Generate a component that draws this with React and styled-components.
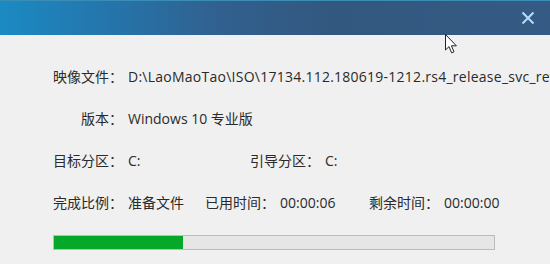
import React from 'react'
import styled, { createGlobalStyle } from 'styled-components'

const GlobalStyle = createGlobalStyle`
  html, body {
    margin: 0;
    padding: 0;
    background: #f0f0f0;
  }
  body {
    font-family: "Open Sans", "Noto Sans CJK SC", sans-serif;
  }
`

const rows = [
  [{ label: '映像文件：', value: 'D:\\LaoMaoTao\\ISO\\17134.112.180619-1212.rs4_release_svc_refresh_CLIENTCONSUMER_RET_x64FRE_zh-cn.iso', wide: true }],
  [{ label: '版本：', value: 'Windows 10 专业版' }],
  [
    { label: '目标分区：', value: 'C:', w: 122 },
    { label: '引导分区：', value: 'C:' }
  ],
  [
    { label: '完成比例：', value: '准备文件', w: 77 },
    { label: '已用时间：', value: '00:00:06', w: 89 },
    { label: '剩余时间：', value: '00:00:00' }
  ]
]

function App() {
  const percent = 130 / 442 * 100
  return (
    <Window>
      <GlobalStyle />
      <TitleBar>
        <Close>
          <svg width="14" height="14" viewBox="0 0 14 14">
            <path d="M1.5 1.5 L12.5 12.5 M12.5 1.5 L1.5 12.5" stroke="#b3ddf8" strokeWidth="2" fill="none" />
          </svg>
        </Close>
        <Cursor>
          <svg width="13" height="20" viewBox="0 0 13 20">
            <path d="M0.5 0.5 L0.5 16 L4 12.6 L6.6 18.8 L9 17.8 L6.4 11.8 L11.4 11.8 Z" fill="#fff" stroke="#222" strokeWidth="1" strokeLinejoin="round" />
          </svg>
        </Cursor>
      </TitleBar>
      <Body>
        {rows.map((row, i) => (
          <Row key={i}>
            {row.map((f, j) => (
              <React.Fragment key={j}>
                <Label first={j === 0}>{f.label}</Label>
                <Value wide={f.wide} style={f.w ? { width: f.w } : undefined}>{f.value}</Value>
              </React.Fragment>
            ))}
          </Row>
        ))}
        <Track>
          <Fill style={{ width: percent + '%' }} />
        </Track>
      </Body>
    </Window>
  )
}

export default App

const Window = styled.div`
  width: 550px;
  height: 264px;
  overflow: hidden;
  position: relative;
  background: #f0f0f0;
  color: #2a2a2a;
  font-size: 14px;
`

const TitleBar = styled.div`
  height: 35px;
  position: relative;
  display: flex;
  justify-content: flex-end;
  align-items: center;
  padding-right: 15px;
  box-sizing: border-box;
  background: linear-gradient(90deg, #1b8ac3 0%, #2673a8 22%, #31608f 40%, #33587f 60%, #355a84 100%);
  border-top: 1px solid #3a8db5;
`

const Close = styled.div`
  width: 14px;
  height: 14px;
  display: flex;
`

const Cursor = styled.div`
  position: absolute;
  left: 445px;
  top: 33px;
  z-index: 2;
  display: flex;
`

const Body = styled.div`
  padding: 20px 0 0 53px;
`

const Row = styled.div`
  height: 42px;
  display: flex;
  align-items: center;
  white-space: nowrap;
`

const Label = styled.span`
  flex: none;
  width: ${p => (p.first ? '70px' : 'auto')};
  text-align: right;
`

const Value = styled.span`
  flex: none;
  margin-left: 5px;
  letter-spacing: ${p => (p.wide ? '0.25px' : 'normal')};
`

const Track = styled.div`
  margin-top: 12px;
  width: 442px;
  height: 15px;
  box-sizing: border-box;
  border: 1px solid #bcbcbc;
  background: #e6e6e6;
  display: flex;
`

const Fill = styled.div`
  height: 100%;
  background: #06a82a;
`
